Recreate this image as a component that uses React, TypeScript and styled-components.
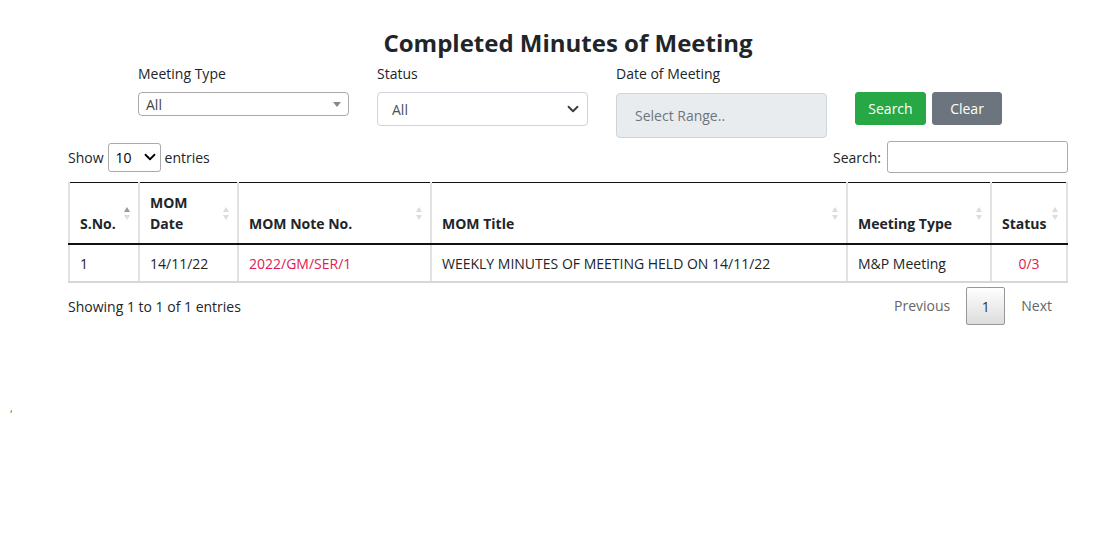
import React from "react";
import styled, { createGlobalStyle } from "styled-components";

const Global = createGlobalStyle`
  html, body { margin: 0; padding: 0; background: #fff; }
  body { font-family: "Open Sans", "Noto Sans", sans-serif; color: #212529; font-size: 14px; }
  * { box-sizing: border-box; }
`;

const Page = styled.div`
  width: 1000px;
  margin-left: 68px;
  padding-top: 26px;
`;

const Title = styled.h3`
  margin: 0;
  text-align: center;
  font-size: 24px;
  font-weight: 700;
  line-height: 34px;
  color: #212529;
`;

const Filters = styled.div`
  display: grid;
  grid-template-columns: 211px 211px 211px auto;
  column-gap: 28px;
  margin-left: 70px;
  margin-top: 3px;
  align-items: start;
`;

const Field = styled.div`
  display: flex;
  flex-direction: column;
`;

const Label = styled.label`
  font-size: 14px;
  line-height: 21px;
  margin-bottom: 8px;
`;

const Select2Box = styled.div`
  height: 24px;
  border: 1px solid #aaa;
  border-radius: 4px;
  display: flex;
  align-items: center;
  justify-content: space-between;
  padding: 0 7px;
  font-size: 14px;
  color: #444;
`;

const Caret = styled.span`
  width: 0;
  height: 0;
  border-left: 4px solid transparent;
  border-right: 4px solid transparent;
  border-top: 5px solid #888;
`;

const FormSelect = styled.div`
  height: 34px;
  border: 1px solid #ced4da;
  border-radius: 4px;
  display: flex;
  align-items: center;
  justify-content: space-between;
  padding: 0 8px 0 14px;
  font-size: 14px;
  color: #495057;
`;

const DateBox = styled.div`
  height: 45px;
  margin-top: 1px;
  background: #e9ecef;
  border: 1px solid #ced4da;
  border-radius: 4px;
  display: flex;
  align-items: center;
  padding-left: 18px;
  font-size: 14px;
  color: #6c757d;
`;

const Buttons = styled.div`
  display: flex;
  gap: 6px;
  padding-top: 29px;
`;

const Btn = styled.button<{ $bg: string; $w: number }>`
  width: ${(p) => p.$w}px;
  height: 33px;
  border: 1px solid ${(p) => p.$bg};
  background: ${(p) => p.$bg};
  color: #fff;
  border-radius: 3px;
  font-family: inherit;
  font-size: 14px;
  padding: 0;
`;

const Controls = styled.div`
  display: flex;
  justify-content: space-between;
  align-items: center;
  margin-top: 3px;
  height: 32px;
`;

const Inline = styled.div`
  display: flex;
  align-items: center;
  gap: 4px;
  font-size: 14px;
`;

const LenSelect = styled.div`
  width: 53px;
  height: 29px;
  border: 1px solid #aaa;
  border-radius: 3px;
  display: flex;
  align-items: center;
  justify-content: space-between;
  padding: 0 4px 0 7px;
  font-size: 14px;
  color: #000;
`;

const SearchInput = styled.div`
  width: 181px;
  height: 32px;
  border: 1px solid #aaa;
  border-radius: 3px;
  margin-left: 2px;
`;

const Table = styled.table`
  width: 998px;
  margin-top: 9px;
  border-collapse: collapse;
  table-layout: fixed;
  font-size: 14px;
`;

const Th = styled.th<{ $w: number }>`
  width: ${(p) => p.$w}px;
  position: relative;
  text-align: left;
  vertical-align: bottom;
  font-weight: 700;
  line-height: 21px;
  padding: 9px 18px 9px 10px;
  height: 60px;
  border-top: 1px solid #111;
  border-bottom: 2px solid #111;
  border-left: 2px solid #dee2e6;
  border-right: 2px solid #dee2e6;
`;

const Sort = styled.span`
  position: absolute;
  right: 8px;
  top: 24px;
  display: flex;
  flex-direction: column;
  gap: 3px;
`;

const Tri = styled.span<{ $up?: boolean; $dark?: boolean }>`
  width: 0;
  height: 0;
  border-left: 3px solid transparent;
  border-right: 3px solid transparent;
  ${(p) => (p.$up ? "border-bottom" : "border-top")}: 5px solid ${(p) => (p.$dark ? "#9a9a9a" : "#dcdcdc")};
`;

const Td = styled.td<{ $color?: string; $center?: boolean }>`
  height: 38px;
  padding: 0 10px;
  color: ${(p) => p.$color || "#212529"};
  text-align: ${(p) => (p.$center ? "center" : "left")};
  border-left: 2px solid #dee2e6;
  border-right: 2px solid #dee2e6;
  border-bottom: 2px solid #d6d6d6;
  white-space: nowrap;
`;

const Footer = styled.div`
  display: flex;
  justify-content: space-between;
  align-items: center;
  margin-top: 4px;
  font-size: 14px;
`;

const Pager = styled.div`
  display: flex;
  align-items: center;
`;

const PageLink = styled.span`
  color: #666;
  padding: 0 16px;
  line-height: 38px;
`;

const PageCurrent = styled.span`
  width: 39px;
  height: 38px;
  display: flex;
  align-items: center;
  justify-content: center;
  border: 1px solid #979797;
  border-radius: 2px;
  background: linear-gradient(#fff, #dcdcdc);
  color: #333;
`;

const Stray = styled.div`
  margin: 78px 0 0 10px;
  font-size: 10px;
  color: #555;
  line-height: 10px;
`;

const Chevron = ({ color }: { color: string }) => (
  <svg width="12" height="12" viewBox="0 0 16 16">
    <path d="M2 5l6 6 6-6" fill="none" stroke={color} strokeWidth="2.4" strokeLinecap="round" strokeLinejoin="round" />
  </svg>
);

const cols: { t: string; w: number }[] = [
  { t: "S.No.", w: 70 },
  { t: "MOM Date", w: 99 },
  { t: "MOM Note No.", w: 193 },
  { t: "MOM Title", w: 416 },
  { t: "Meeting Type", w: 144 },
  { t: "Status", w: 76 },
];

export default function App() {
  return (
    <>
      <Global />
      <Page>
        <Title>Completed Minutes of Meeting</Title>
        <Filters>
          <Field>
            <Label>Meeting Type</Label>
            <Select2Box>
              <span>All</span>
              <Caret />
            </Select2Box>
          </Field>
          <Field>
            <Label>Status</Label>
            <FormSelect>
              <span>All</span>
              <Chevron color="#343a40" />
            </FormSelect>
          </Field>
          <Field>
            <Label>Date of Meeting</Label>
            <DateBox>Select Range..</DateBox>
          </Field>
          <Buttons>
            <Btn $bg="#28a745" $w={71}>Search</Btn>
            <Btn $bg="#6c757d" $w={70}>Clear</Btn>
          </Buttons>
        </Filters>
        <Controls>
          <Inline>
            <span>Show</span>
            <LenSelect>
              <span>10</span>
              <Chevron color="#000" />
            </LenSelect>
            <span>entries</span>
          </Inline>
          <Inline>
            <span>Search:</span>
            <SearchInput />
          </Inline>
        </Controls>
        <Table>
          <thead>
            <tr>
              {cols.map((c, i) => (
                <Th key={c.t} $w={c.w}>
                  {c.t === "MOM Date" ? (
                    <>
                      MOM
                      <br />
                      Date
                    </>
                  ) : (
                    c.t
                  )}
                  <Sort>
                    <Tri $up $dark={i === 0} />
                    <Tri />
                  </Sort>
                </Th>
              ))}
            </tr>
          </thead>
          <tbody>
            <tr>
              <Td>1</Td>
              <Td>14/11/22</Td>
              <Td $color="#e0204f">2022/GM/SER/1</Td>
              <Td>WEEKLY MINUTES OF MEETING HELD ON 14/11/22</Td>
              <Td>M&amp;P Meeting</Td>
              <Td $color="#e0204f" $center>0/3</Td>
            </tr>
          </tbody>
        </Table>
        <Footer>
          <span>Showing 1 to 1 of 1 entries</span>
          <Pager>
            <PageLink>Previous</PageLink>
            <PageCurrent>1</PageCurrent>
            <PageLink>Next</PageLink>
          </Pager>
        </Footer>
      </Page>
      <Stray>,</Stray>
    </>
  );
}
